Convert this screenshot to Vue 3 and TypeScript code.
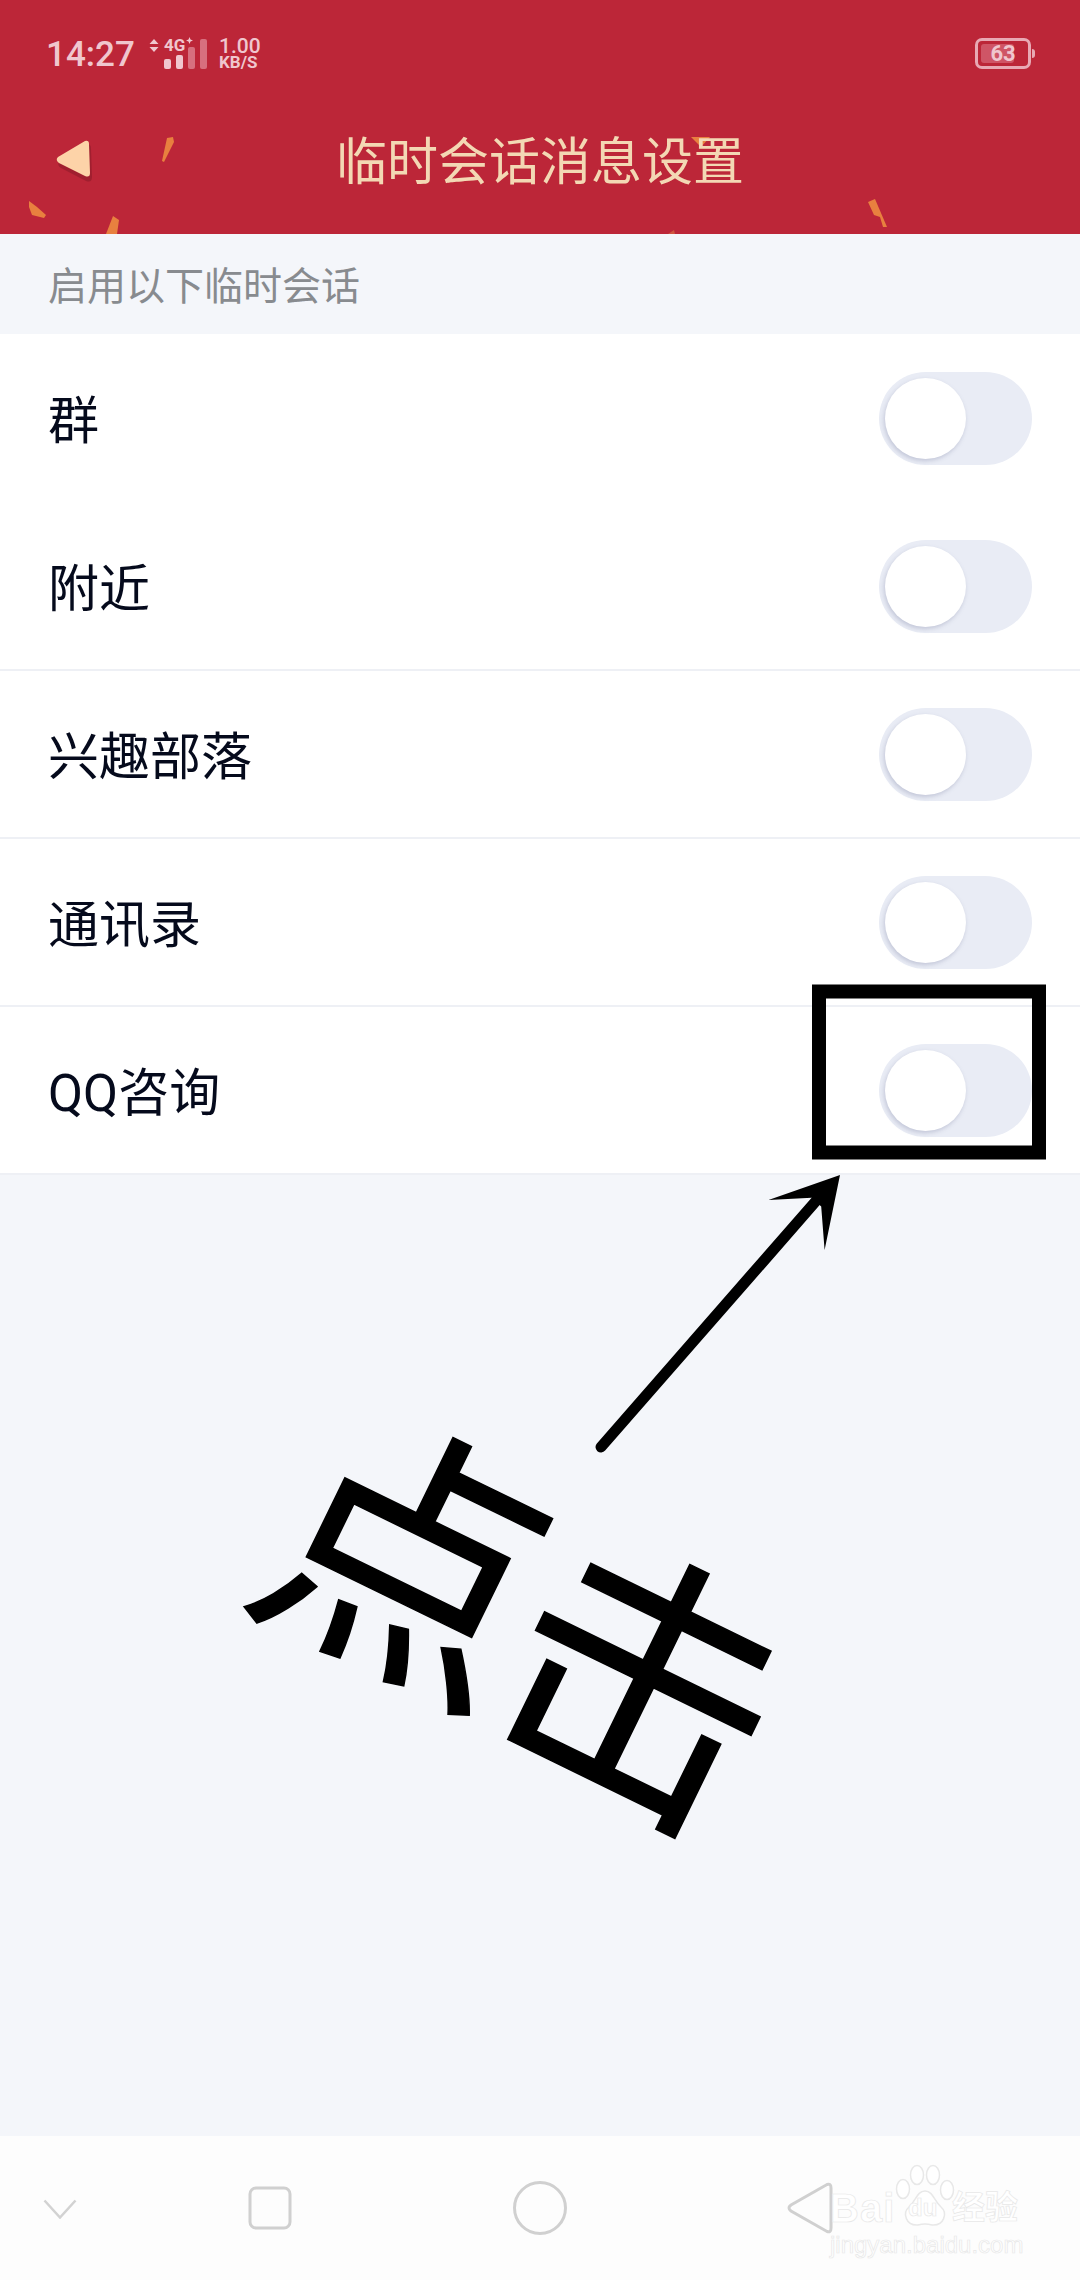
<script setup lang="ts">
const rows = [
  { label: '群', divided: false },
  { label: '附近', divided: true },
  { label: '兴趣部落', divided: true },
  { label: '通讯录', divided: true },
  { label: 'QQ咨询', divided: true },
]
</script>

<template>
  <div class="page">
    <!-- Header with confetti -->
    <header class="header">
      <svg class="confetti" width="1080" height="234" viewBox="0 0 1080 234">
        <path d="M167 138l6-1 1 5-10 20-2-1z" fill="#e8803f" />
        <path d="M29 201l8 6 9 8-2 3-12-3-3-8z" fill="#e8803f" />
        <path d="M113 216l6 4-2 14h-11z" fill="#e8803f" />
        <path d="M691 137h19l-9 10z" fill="#e8803f" />
        <path d="M868 202l7-3 12 28h-4l-3-10-6-2z" fill="#e8803f" />
        <path d="M668 234l6-4 1 4z" fill="#d0553f" />
      </svg>

      <div class="status">
        <span class="time">14:27</span>
        <svg class="net-arrows" width="10" height="13" viewBox="0 0 10 13">
          <path d="M5 0l4.500 5h-9zM5 13l4.500-5h-9z" fill="#f0c6ce" />
        </svg>
        <div class="signal">
          <div class="signal-top">
            <span class="net">4G</span>
            <svg width="7" height="7" viewBox="0 0 7 7">
              <path d="M3.500 0l1 2.500 2.500 1-2.500 1-1 2.500-1-2.500-2.500-1 2.500-1z" fill="#f0c6ce" />
            </svg>
          </div>
          <div class="bars">
            <i class="bar bar-1"></i>
            <i class="bar bar-2"></i>
            <i class="bar bar-3"></i>
            <i class="bar bar-4"></i>
          </div>
        </div>
        <div class="speed">
          <span class="speed-val">1.00</span>
          <span class="speed-unit">KB/S</span>
        </div>
        <div class="battery">
          <i class="battery-fill"></i>
          <span class="battery-num">63</span>
        </div>
      </div>

      <div class="titlebar">
        <svg class="back" width="44" height="48" viewBox="0 0 44 48">
          <path d="M32 4Q36 2 36 8L37 36Q37 42 31 40L6 27Q1 24 5 20z" fill="#8e1b2a" opacity="0.6" transform="translate(1 3)" />
          <path d="M31 3Q35 2 35 6L36 35Q36 40 31 38L5 25Q1 22 4 19z" fill="#fdd3a8" />
        </svg>
        <h1 class="title">临时会话消息设置</h1>
      </div>
    </header>

    <div class="section">启用以下临时会话</div>

    <ul class="list">
      <li v-for="row in rows" :key="row.label" class="row" :class="{ divided: row.divided }">
        <span class="row-label">{{ row.label }}</span>
        <div class="switch"><i class="knob"></i></div>
      </li>
    </ul>

    <div class="spacer"></div>

    <!-- System nav bar -->
    <nav class="nav">
      <svg class="nav-icon chevron" width="34" height="20" viewBox="0 0 34 20">
        <path d="M1.500 1.500L17 18.500 32.500 1.500" fill="none" stroke="#d2d2d2" stroke-width="2.500" />
      </svg>
      <svg class="nav-icon" width="44" height="44" viewBox="0 0 44 44">
        <rect x="2" y="2" width="40" height="40" rx="6" fill="none" stroke="#d0d0d0" stroke-width="3" />
      </svg>
      <svg class="nav-icon" width="54" height="54" viewBox="0 0 54 54">
        <circle cx="27" cy="27" r="25.500" fill="none" stroke="#d0d0d0" stroke-width="3" />
      </svg>
      <svg class="nav-icon" width="46" height="54" viewBox="0 0 46 54">
        <path d="M40 3.500Q44 2 44 7V47Q44 52 40 50.500L4 30Q0 27 4 24z" fill="none" stroke="#d0d0d0" stroke-width="3" />
      </svg>
    </nav>

    <!-- Baidu watermark -->
    <div class="wm">
      <span class="wm-bai">Bai</span>
      <svg class="wm-paw" width="60" height="64" viewBox="0 0 60 64">
        <g fill="#fff" stroke="#e8e8e8" stroke-width="1.500">
          <ellipse cx="8" cy="25" rx="6.500" ry="9.500" />
          <ellipse cx="22" cy="11" rx="6.500" ry="9.500" />
          <ellipse cx="38" cy="11" rx="6.500" ry="9.500" />
          <ellipse cx="52" cy="26" rx="6.500" ry="9.500" />
          <path d="M30 27C22 27 21 37 14 43C7 49 11 62 23 61Q30 59 37 61C49 62 53 49 46 43C39 37 38 27 30 27z" />
        </g>
      </svg>
      <span class="wm-du">du</span>
      <span class="wm-cn">经验</span>
      <span class="wm-url">jingyan.baidu.com</span>
    </div>

    <!-- Annotation drawn on top of the screenshot -->
    <svg class="mark" width="1080" height="2280" viewBox="0 0 1080 2280">
      <rect x="819" y="991.500" width="220" height="161" fill="none" stroke="#000" stroke-width="14" />
      <path d="M601 1447L816 1201" stroke="#000" stroke-width="11" stroke-linecap="round" fill="none" />
      <path d="M840 1175L768.500 1200 811.700 1197.700 821.200 1206.500 824.600 1250z" fill="#000" />
    </svg>
    <div class="scrawl"><span>点</span><span class="scrawl-b">击</span></div>
  </div>
</template>

<style scoped>
.page {
  position: relative;
  display: flex;
  flex-direction: column;
  width: 1080px;
  height: 2280px;
  overflow: hidden;
  background: #f4f6fa;
  font-family: Roboto, "Noto Sans CJK SC", sans-serif;
}

.header {
  position: relative;
  height: 234px;
  background: #bc2638;
  flex-shrink: 0;
}

.confetti {
  position: absolute;
  top: 0;
  left: 0;
}

.status {
  position: relative;
  display: flex;
  align-items: flex-start;
  height: 96px;
  padding: 37px 48px 0 46px;
  box-sizing: border-box;
  color: #f0c6ce;
}

.time {
  width: 103px;
  font-size: 35px;
  line-height: 36px;
  font-weight: 500;
}

.signal {
  width: 55px;
  margin-left: 5px;
}

.net-arrows {
  margin-top: 2px;
}

.signal-top {
  display: flex;
  align-items: flex-start;
  height: 17px;
}

.net {
  width: 22px;
  font-size: 17px;
  line-height: 16px;
  font-weight: 700;
}

.bars {
  display: flex;
  align-items: flex-end;
  gap: 5px;
  height: 30px;
  margin-top: -15px;
}

.bar {
  width: 7px;
  border-radius: 2px;
  background: #f0c6ce;
}

.bar-1 {
  height: 10px;
}

.bar-2 {
  height: 14px;
}

.bar-3 {
  height: 22px;
  background: #d76f7e;
}

.bar-4 {
  height: 30px;
  background: #d76f7e;
}

.speed {
  display: flex;
  flex-direction: column;
  width: 44px;
  font-weight: 500;
}

.speed-val {
  font-size: 21px;
  line-height: 18px;
}

.speed-unit {
  font-size: 17px;
  line-height: 15px;
  font-weight: 700;
}

.battery {
  position: relative;
  display: flex;
  align-items: center;
  justify-content: center;
  width: 56px;
  height: 31px;
  margin-left: auto;
  margin-right: 1px;
  margin-top: 1px;
  box-sizing: border-box;
  border: 3px solid #e8a9b4;
  border-radius: 7px;
}

.battery::after {
  content: "";
  position: absolute;
  right: -7px;
  top: 8px;
  width: 3px;
  height: 9px;
  border-radius: 0 3px 3px 0;
  background: #e8a9b4;
}

.battery-fill {
  position: absolute;
  left: 3px;
  top: 3px;
  bottom: 3px;
  width: 33px;
  border-radius: 3px;
  background: #cf5566;
}

.battery-num {
  position: relative;
  font-size: 22px;
  line-height: 22px;
  font-weight: 700;
  color: #f0c6ce;
}

.titlebar {
  position: relative;
  display: flex;
  align-items: center;
  justify-content: center;
  height: 128px;
  padding-top: 8px;
  box-sizing: border-box;
  margin-top: -1px;
}

.back {
  position: absolute;
  left: 54px;
  top: 43px;
}

.title {
  margin: 0;
  font-size: 51px;
  line-height: 60px;
  font-weight: 400;
  color: #f3d8b4;
}

.section {
  height: 100px;
  padding-left: 48px;
  font-size: 39px;
  line-height: 106px;
  color: #888b8f;
  flex-shrink: 0;
}

.list {
  margin: 0;
  padding: 0;
  list-style: none;
  background: #fff;
}

.row {
  display: flex;
  align-items: center;
  justify-content: space-between;
  height: 168px;
  padding: 0 48px;
  box-sizing: border-box;
}

.row.divided {
  box-shadow: inset 0 -1px 0 #eef0f5, 0 1px 0 #eef0f5;
}

.row-label {
  padding-top: 8px;
  font-size: 51px;
  line-height: 60px;
  color: #050a1c;
}

.switch {
  position: relative;
  width: 153px;
  height: 93px;
  border-radius: 47px;
  background: #e9ecf5;
}

.knob {
  position: absolute;
  left: 6px;
  top: 6px;
  width: 81px;
  height: 81px;
  border-radius: 50%;
  background: #fff;
  box-shadow: -1px 2px 4px rgba(120, 125, 160, 0.35);
}

.spacer {
  flex: 1;
}

.nav {
  position: relative;
  height: 144px;
  background: #fdfdfd;
  flex-shrink: 0;
}

.nav-icon {
  position: absolute;
  top: 45px;
}

.nav-icon:nth-child(1) {
  left: 43px;
  top: 63px;
}

.nav-icon:nth-child(2) {
  left: 248px;
  top: 50px;
}

.nav-icon:nth-child(3) {
  left: 513px;
  top: 45px;
}

.nav-icon:nth-child(4) {
  left: 787px;
  top: 45px;
}

.wm {
  position: absolute;
  left: 830px;
  top: 2164px;
  width: 200px;
  height: 100px;
  color: #fff;
  -webkit-text-stroke: 0.7px #e8e8e8;
}

.wm-bai {
  position: absolute;
  left: 0;
  top: 24px;
  font-family: "Liberation Sans", sans-serif;
  font-size: 40px;
  line-height: 40px;
  font-weight: 700;
  letter-spacing: 1px;
}

.wm-paw {
  position: absolute;
  left: 65px;
  top: 0;
}

.wm-du {
  position: absolute;
  left: 78px;
  top: 32px;
  font-family: "Liberation Sans", sans-serif;
  font-size: 24px;
  line-height: 24px;
  font-weight: 700;
}

.wm-cn {
  position: absolute;
  left: 122px;
  top: 26px;
  font-size: 33px;
  line-height: 36px;
  font-weight: 700;
}

.wm-url {
  position: absolute;
  left: 0;
  top: 66px;
  font-family: "Liberation Sans", sans-serif;
  font-size: 24px;
  line-height: 30px;
}

.mark {
  position: absolute;
  top: 0;
  left: 0;
}

.scrawl {
  position: absolute;
  left: 259px;
  top: 1443px;
  width: 560px;
  font-family: "Noto Sans CJK SC", sans-serif;
  font-size: 275px;
  line-height: 320px;
  text-align: center;
  white-space: nowrap;
  color: #000;
  -webkit-text-stroke: 1.5px #000;
  transform: rotate(26deg);
}

.scrawl-b {
  position: relative;
  left: -9px;
  top: 10px;
}
</style>
